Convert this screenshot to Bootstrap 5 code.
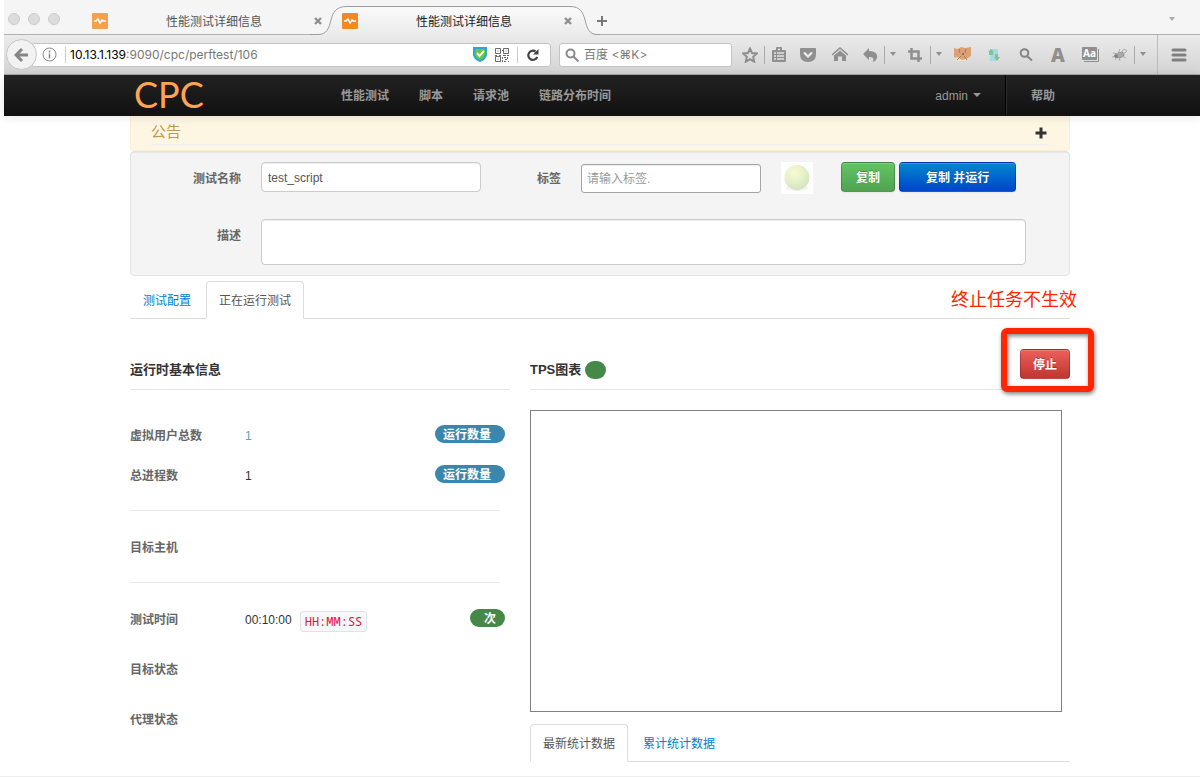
<!DOCTYPE html>
<html lang="zh-CN">
<head>
<meta charset="utf-8">
<meta name="viewport" content="width=device-width, initial-scale=1">
<title>性能测试详细信息</title>
<link href="https://cdn.jsdelivr.net/npm/bootstrap@5.3.0/dist/css/bootstrap.min.css" rel="stylesheet">
<style>
  body { font: 12px/20px "Liberation Sans", "Noto Sans CJK SC", sans-serif; color: #333; background: #fff; }
  button { font: inherit; }
  .btn { font-size: 12px; line-height: 20px; }
  .shell { padding-left: 4px; }
  .icon-btn { border: 0; padding: 0; background: none; color: #8f8f8f; display: flex; align-items: center; justify-content: center; height: 18px; flex: none; }
  .icon-btn svg { flex: none; }
  .w16 { width: 16px; } .w28 { width: 28px; } .w30 { width: 30px; } .w32 { width: 32px; }
  .sep { border-left: 1px solid #aaa; }

  /* browser window */
  .tab-strip { height: 35px; background: #f5f5f5; border-bottom: 1px solid #b1b1b1; padding-left: 4px; color: #555; }
  .light { width: 12px; height: 12px; border-radius: 50%; background: #dcdcdc; border: 1px solid #cbcbcb; }
  .lights { width: 72px; gap: 8px; padding-top: 3px; }
  .browser-tab { width: 250px; height: 35px; padding: 6px 6px 0 12px; position: relative; color: #555; }
  .browser-tab > * { position: relative; }
  .browser-tab > .tab-title { padding: 2px 0 0 8px; }
  .browser-tab > .tab-shape { position: absolute; left: -20px; top: 0; }
  .browser-tab.current { color: #222; }
  .address-row { height: 40px; background: linear-gradient(#ebebeb, #d3d3d3); border-bottom: 1px solid #a8a8a8; padding-left: 2px; }
  .back { width: 31px; height: 31px; border: 1px solid #c6c6c6; border-radius: 50%; background: #f2f2f2; padding: 0; flex: none; z-index: 1; }
  .field { height: 24px; background: #fff; border: 1px solid #c4c4c4; border-radius: 3px; font-family: Inter, "Noto Sans CJK SC", sans-serif; font-size: 12px; color: #777; }
  .address { margin-left: -6px; padding-left: 10px; }
  .address b { font-weight: 400; color: #000; }
  .bar { height: 16px; width: 5px; border-left: 1px solid #ccc; }
  .search { width: 173px; padding-left: 5px; flex: none; }
  .search input { border: 0; padding: 0; min-width: 0; outline: 0; color: #777; font-size: 12px; line-height: 20px; }
  .search input::placeholder { color: #777; opacity: 1; }
  .menu-btn { width: 43px; height: 39px; border-left: 1px solid #bbb; margin-left: 7px; }

  /* application */
  .app { width: 100%; max-width: 940px; margin: 0 auto; }
  .topbar { height: 41px; background: linear-gradient(#222, #111); padding: 0 4px 0 0; position: relative; box-shadow: 0 1px 10px rgba(0,0,0,.1); border-bottom: 1px solid #1a1014; }
  .topbar .nav-link { color: #999; font-size: 12px; line-height: 20px; padding: 11px 15px 9px; font-weight: 700; }
  .topbar .dropdown-toggle { font-weight: 400; }
  .topbar .dropdown-toggle::after { border-width: 4px 4px 0; margin-left: 5px; vertical-align: 3px; }
  .logo { color: #ffa552; font: 36px/39px Lato, sans-serif; text-decoration: none; width: 196px; padding-left: 4px; }
  .divider { border-left: 1px solid #000; box-shadow: inset 1px 0 #2b2b2b; padding-left: 10px; }
  .notice { background: #fdf6e2; border: 1px solid #fbeed5; border-top: 0; border-radius: 0 0 4px 4px; padding: 0 20px 5px; }
  .notice-head { border-bottom: 1px solid #eee; height: 29px; }
  .notice-head .icon-btn { margin: 8px 2px 0 0; }
  .notice h1 { font-size: 15px; line-height: 20px; color: #c09853; margin: 6px 0 0; font-weight: 400; }
  .panel { background: #f4f4f4; border: 1px solid #e3e3e3; border-radius: 4px; padding: 10px 0; box-shadow: inset 0 1px 1px rgba(0,0,0,.05); }
  .panel label, .info-label { font-weight: 700; color: #666; }
  .panel label { padding-top: 7px; flex: none; }
  .lab-main { width: 110px; text-align: right; }
  .lab-tag { width: 80px; text-align: right; }
  .form-control { font-size: 12px; line-height: 20px; padding: 5px 6px 3px; color: #555; border-color: #ccc; border-radius: 4px; box-shadow: inset 0 1px 1px rgba(0,0,0,.075); margin-left: 20px; }
  .form-control::placeholder { color: #999; }
  .name-box { width: 220px; height: 30px; }
  .tag-box { width: 180px; height: 29px; padding: 3px 5px; border-color: #a5a5a5; border-radius: 3px; margin-top: 2px; }
  .desc-row { margin-top: 25px; }
  .desc-box { height: 46px; resize: none; margin-right: 43px; }
  .status-ball { width: 32px; height: 32px; background: #fff; margin: 0 28px 0 20px; }
  .act { height: 30px; padding: 5px 14px 3px; border: 1px solid rgba(0,0,0,.2); border-radius: 4px; color: #fff; font-weight: 700; text-shadow: 0 -1px 0 rgba(0,0,0,.25); box-shadow: inset 0 1px 0 rgba(255,255,255,.2), 0 1px 2px rgba(0,0,0,.05); }
  .act:hover { color: #fff; }
  .act-green { background: linear-gradient(#62c462, #51a351); }
  .act-blue { background: linear-gradient(#0088cc, #0044cc); padding: 5px 26px 3px; margin-left: 4px; }
  .act-red { background: linear-gradient(#ee5f5b, #bd362f); padding: 5px 12px 3px; }
  .nav-tabs { border-color: #ddd; gap: 2px; }
  .nav-tabs .nav-link { font-size: 12px; line-height: 20px; padding: 9px 12px 7px; color: #0080cc; border-radius: 4px 4px 0 0; }
  .nav-tabs .nav-link.active { color: #555; border-color: #ddd #ddd #fff; }
  .main-tabs { margin-top: 5px; position: relative; }
  .note { position: absolute; right: -7px; top: 6px; font-size: 18px; line-height: 26px; color: #ff2600; }
  .board { gap: 20px; margin-top: 30px; }
  .left-col { flex: 380 1 0; } .right-col { flex: 540 1 0; }
  .board-head { height: 41px; border-bottom: 1px solid #e5e5e5; margin-bottom: 20px; }
  .board-head h2 { font-size: 13px; line-height: 20px; font-weight: 700; margin: 11px 0 0; }
  .dot { display: inline-block; width: 21px; height: 18px; border-radius: 9px; background: #468847; vertical-align: -5px; margin-left: 4px; }
  .marked { position: relative; }
  .marked::after { content: ""; position: absolute; inset: -21px -24px -13px -19px; border: 6px solid #ff2600; border-radius: 6px; filter: drop-shadow(1px 2px 2px rgba(0,0,0,.5)); pointer-events: none; }
  .info-list { padding-top: 6px; }
  .info { min-height: 40px; padding-right: 5px; }
  .info.tall { min-height: 50px; }
  .states { margin-top: 5px; }
  .info-label { width: 115px; }
  .user-count { color: #5aa0c8; }
  .rule { border: 0; border-top: 1px solid #e8e8e8; opacity: 1; margin: 14px 10px 17px 0; }
  .pill { font-size: 12px; line-height: 20px; height: 18px; font-weight: 700; color: #fff; border-radius: 9px; background: #3a87ad; padding: 0 14px 0 8px; margin-bottom: 4px; }
  .pill-green { background: #468847; padding: 0 9px 0 14px; }
  .fmt { font: 12px/19px "Noto Sans Mono", "DejaVu Sans Mono", monospace; color: #d14; background: #f7f7f9; border: 1px solid #e1e1e8; border-radius: 3px; padding: 0 4px; margin: 2px 0 0 8px; }
  .chart { height: 302px; border: 1px solid #808080; margin: 0 8px 12px 0; }
  .page-end { border-top: 1px solid #eee; margin-top: 14px; }
</style>
</head>
<body>
<div class="shell">
  <header>
    <div class="tab-strip d-flex">
      <div class="lights d-flex align-items-center">
        <span class="light"></span><span class="light"></span><span class="light"></span>
      </div>
      <div class="browser-tab d-flex align-items-center">
        <svg width="16" height="16"><rect width="16" height="16" rx="1" fill="#f6a04c"/><path d="M2 8h2l2-2 2 4 2-3 1 1h3" fill="none" stroke="#fff" stroke-width="1.500"/></svg>
        <span class="tab-title flex-fill text-center">性能测试详细信息</span>
        <button class="icon-btn" aria-label="关闭"><svg width="12" height="10" stroke="currentColor" stroke-width="2.400"><path d="M3 2l6 6M9 2L3 8"/></svg></button>
      </div>
      <div class="browser-tab current d-flex align-items-center">
        <svg class="tab-shape" width="290" height="36"><defs><linearGradient id="tg" x2="0" y2="1"><stop stop-color="#fafafa"/><stop offset="1" stop-color="#ebebeb"/></linearGradient></defs><path d="M0 34.500H8C17 34.500 19 28 21 20C23 12 26 6.500 37 6.500H260C270 6.500 273 12 275 20C277 28 279 34.500 287 34.500H290V36H0Z" fill="url(#tg)"/><path d="M0 34.500H8C17 34.500 19 28 21 20C23 12 26 6.500 37 6.500H260C270 6.500 273 12 275 20C277 28 279 34.500 287 34.500H290" fill="none" stroke="#9d9d9d"/></svg>
        <svg width="16" height="16"><rect width="16" height="16" rx="1" fill="#f08a24"/><path d="M2 8h2l2-2 2 4 2-3 1 1h3" fill="none" stroke="#fff" stroke-width="1.500"/></svg>
        <span class="tab-title flex-fill text-center">性能测试详细信息</span>
        <button class="icon-btn" aria-label="关闭"><svg width="12" height="10" stroke="currentColor" stroke-width="2.400"><path d="M3 2l6 6M9 2L3 8"/></svg></button>
      </div>
      <button class="icon-btn align-self-center ms-3 mt-2" aria-label="新标签"><svg width="12" height="12" stroke="#777" stroke-width="2"><path d="M6 1v10M1 6h10"/></svg></button>
      <button class="icon-btn ms-auto align-self-center me-4 mt-1" aria-label="全部标签"><svg width="8" height="5"><path d="M1 0h6L4 4z" fill="#aaa"/></svg></button>
    </div>
    <div class="address-row d-flex align-items-center">
      <button class="back" aria-label="后退"><svg width="16" height="16" fill="none" stroke="#858585" stroke-width="3"><path d="M14 8H3M8 2L2 8l6 6"/></svg></button>
      <div class="field address d-flex align-items-center flex-fill">
        <svg width="15" height="15" fill="none" stroke="#888"><circle cx="7.500" cy="7.500" r="6.500"/><path d="M7.500 6.500v5M7.500 3.500v2" stroke-width="1.500"/></svg>
        <span class="bar ms-2"></span>
        <span class="text-nowrap"><b>10.13.1.139</b>:9090/cpc/perftest/106</span>
        <span class="ms-auto d-flex align-items-center">
          <svg width="14" height="15"><path d="M0 0h14v8q-1 5-7 7q-6-2-7-7z" fill="#2aa7d4"/><path d="M2 2h10v6q-1 3-5 5q-4-2-5-5z" fill="#62c93c"/><path d="M4 6l2.500 3L11 4" fill="none" stroke="#fff" stroke-width="2"/></svg>
          <svg class="mx-2" width="14" height="14" fill="none" stroke="#6a6a6a"><path d="M.5.5h5v5h-5zM8.500.5h5v5h-5zM.5 8.500h5v5h-5zM2.500 3h1M10.500 3h1M2.500 11h1M8 7.500h3M12 7.500h2M0 7.500h2M4 7.500h2M7.500 9v2M7.500 12v2M9 9.500h2M12.500 9v2M10 11.500h2M9 13.500h2M13 13.500h1M7 2.500h1"/></svg>
          <span class="bar"></span>
          <button class="icon-btn me-2 ms-1" aria-label="刷新"><svg width="16" height="14"><path d="M11.200 9A4.600 4.600 0 1 1 9.500 3.500" fill="none" stroke="#444" stroke-width="2.200"/><path d="M12.500 1v5.500H7z" fill="#444"/></svg></button>
        </span>
      </div>
      <label class="field search d-flex align-items-center ms-2 me-1">
        <svg class="me-1 flex-shrink-0" width="15" height="14" fill="none" stroke="#8a8a8a" stroke-width="2"><circle cx="5.500" cy="5.500" r="4"/><path d="M8.500 8.500l5 5"/></svg>
        <input type="text" placeholder="百度 &lt;⌘K&gt;" aria-label="搜索">
      </label>
      <div class="d-flex align-items-center flex-shrink-0" role="toolbar">
        <button class="icon-btn w28" aria-label="收藏"><svg width="16" height="16" fill="none" stroke="currentColor" stroke-width="2"><path d="M8 1.500l2 4.500 4.800.500-3.600 3.300 1 4.900L8 12.200l-4.200 2.500 1-4.900L1.200 6.500 6 6z"/></svg></button>
        <button class="icon-btn sep w28" aria-label="书签"><svg width="14" height="15"><path d="M1 3h3V1q0-1 1-1h4q1 0 1 1v2h3q1 0 1 1v10q0 1-1 1H1q-1 0-1-1V4q0-1 1-1z" fill="currentColor"/><path d="M2 6h2M5 6h7M2 9h2M5 9h7M2 12h2M5 12h7M6 2.500h2" stroke="#e4e4e4" stroke-width="1.500"/></svg></button>
        <button class="icon-btn w32" aria-label="Pocket"><svg width="16" height="14"><path d="M1 0h14q1 0 1 1v5q0 8-8 8T0 6V1q0-1 1-1z" fill="currentColor"/><path d="M4 4.500l4 4 4-4" fill="none" stroke="#eee" stroke-width="2.200"/></svg></button>
        <button class="icon-btn w32" aria-label="主页"><svg width="16" height="15"><path d="M0 8l8-7 8 7" fill="none" stroke="currentColor" stroke-width="1.500"/><path d="M8 3.500l6 5V14h-4V9.500H6V14H2V8.500z" fill="currentColor"/></svg></button>
        <button class="icon-btn w28" aria-label="撤销"><svg width="15" height="14"><path d="M6 0v3c6 0 9 3 8 7q-1 3-4 4c1-4 0-5-4-5v3L0 6z" fill="currentColor"/></svg></button>
        <button class="icon-btn sep w16" aria-label="展开"><svg width="8" height="5"><path d="M1 0h6L4 4z" fill="currentColor"/></svg></button>
        <button class="icon-btn w30" aria-label="截图"><svg width="14" height="14" fill="none" stroke="currentColor" stroke-width="2.500"><path d="M3.500 0v10.500H14M0 3.500h10.500V14"/></svg></button>
        <button class="icon-btn sep w16" aria-label="展开"><svg width="8" height="5"><path d="M1 0h6L4 4z" fill="currentColor"/></svg></button>
        <button class="icon-btn w32" aria-label="狐狸"><svg width="17" height="15"><path d="M0 1l4 1 3-2 4 1 6-1v9l-3 2-3 2H4l-4-3z" fill="#dfa077"/><path d="M0 11l4-1 4 3 7-2-3 3H2z" fill="#e8e6c4"/><path d="M5 2l1 4M12 2l-1 4M3 13l4-4M13 13l-3-4" stroke="#a77858"/><circle cx="9" cy="7" r="1" fill="#666"/></svg></button>
        <button class="icon-btn w32" aria-label="同步"><svg width="12" height="14"><path d="M2 1h8v12H2z" fill="#a9d8e8"/><path d="M0 4l3-3 3 3H5v3H1V4zM6 9h1V6h3v3h2l-3 4z" fill="#7cc490"/></svg></button>
        <button class="icon-btn w32" aria-label="查找"><svg width="14" height="14" fill="none" stroke="#858585" stroke-width="2"><circle cx="5.500" cy="5" r="3.800"/><path d="M8 8l5 4.500"/></svg></button>
        <button class="icon-btn w32" aria-label="字体"><svg width="20" height="30"><text x="10" y="22" text-anchor="middle" fill="currentColor" font-family="Open Sans" font-weight="800" font-size="19">A</text></svg></button>
        <button class="icon-btn w32" aria-label="字典"><svg width="17" height="15"><path d="M2 14.500h14.500V2" fill="none" stroke="currentColor"/><rect width="15" height="13" rx="1" fill="currentColor"/><text x="7.500" y="10" text-anchor="middle" fill="#fff" font-family="Noto Sans" font-weight="700" font-size="10">Aa</text></svg></button>
        <button class="icon-btn w28" aria-label="调试"><svg width="16" height="14" fill="none" stroke="#8c8c8c"><ellipse cx="8" cy="7" rx="4" ry="2.500" fill="#aaa" transform="rotate(-20 8 7)"/><path d="M1 5l5 1 2-5M9 5l3-4 3 2-5 4M0 9l5-1-2 4M7 9l1 4M10 8l4 2" stroke="#aaa"/><circle cx="4" cy="8" r="1.500" fill="#777"/></svg></button>
        <button class="icon-btn sep w16" aria-label="展开"><svg width="8" height="5"><path d="M1 0h6L4 4z" fill="currentColor"/></svg></button>
        <button class="icon-btn menu-btn" aria-label="菜单"><svg width="16" height="14" stroke="#808080" stroke-width="3" stroke-linecap="round"><path d="M2 2h12M2 7h12M2 12h12"/></svg></button>
      </div>
    </div>
  </header>
  <nav class="topbar">
    <div class="app d-flex">
      <a class="logo" href="#">CPC</a>
      <div class="nav flex-nowrap">
        <a class="nav-link" href="#">性能测试</a>
        <a class="nav-link" href="#">脚本</a>
        <a class="nav-link" href="#">请求池</a>
        <a class="nav-link" href="#">链路分布时间</a>
      </div>
      <div class="nav flex-nowrap ms-auto">
        <a class="nav-link dropdown-toggle pe-4" href="#">admin</a>
        <div class="divider"><a class="nav-link" href="#">帮助</a></div>
      </div>
    </div>
  </nav>
</div>

<main class="app">
  <section class="notice">
    <div class="notice-head d-flex justify-content-between">
      <h1>公告</h1>
      <button class="icon-btn" aria-label="展开公告"><svg width="12" height="12" stroke="#333" stroke-width="3"><path d="M6 .5v11M.5 6h11"/></svg></button>
    </div>
  </section>
  <form class="panel">
    <div class="d-flex align-items-start">
      <label class="lab-main" for="name">测试名称</label>
      <input class="form-control name-box" id="name" value="test_script">
      <label class="lab-tag" for="tag">标签</label>
      <input class="form-control tag-box" id="tag" placeholder="请输入标签.">
      <svg class="status-ball flex-shrink-0" viewBox="0 0 32 32"><defs><radialGradient id="ball" cx=".4" cy=".3" r=".8"><stop stop-color="#f8fcd2"/><stop offset=".5" stop-color="#e4f0ca"/><stop offset="1" stop-color="#cfe0bb"/></radialGradient></defs><ellipse cx="16" cy="26" rx="11" ry="3" fill="#f1f1f1"/><circle cx="16" cy="15.500" r="12.500" fill="url(#ball)"/></svg>
      <button type="button" class="btn act act-green">复制</button>
      <button type="button" class="btn act act-blue">复制 并运行</button>
    </div>
    <div class="d-flex desc-row">
      <label class="lab-main" for="desc">描述</label>
      <textarea class="form-control desc-box" id="desc"></textarea>
    </div>
  </form>

  <div class="main-tabs">
    <ul class="nav nav-tabs">
      <li class="nav-item"><a class="nav-link" href="#">测试配置</a></li>
      <li class="nav-item"><a class="nav-link active" href="#">正在运行测试</a></li>
    </ul>
    <span class="note">终止任务不生效</span>
  </div>

  <div class="board d-flex">
    <section class="left-col">
      <div class="board-head d-flex align-items-start"><h2>运行时基本信息</h2></div>
      <div class="info-list">
        <div class="info d-flex align-items-center"><span class="info-label">虚拟用户总数</span><span class="user-count">1</span><span class="pill ms-auto">运行数量</span></div>
        <div class="info d-flex align-items-center"><span class="info-label">总进程数</span><span>1</span><span class="pill ms-auto">运行数量</span></div>
        <hr class="rule">
        <div class="info d-flex align-items-center"><span class="info-label">目标主机</span></div>
        <hr class="rule">
        <div class="info d-flex align-items-center"><span class="info-label">测试时间</span><span>00:10:00</span><code class="fmt">HH:MM:SS</code><span class="pill pill-green ms-auto">次</span></div>
        <div class="states">
          <div class="info tall d-flex align-items-center"><span class="info-label">目标状态</span></div>
          <div class="info tall d-flex align-items-center"><span class="info-label">代理状态</span></div>
        </div>
      </div>
    </section>
    <section class="right-col">
      <div class="board-head d-flex justify-content-between align-items-start">
        <h2>TPS图表<span class="dot"></span></h2>
        <span class="marked"><button type="button" class="btn act act-red">停止</button></span>
      </div>
      <div class="chart"></div>
      <ul class="nav nav-tabs">
        <li class="nav-item"><a class="nav-link active" href="#">最新统计数据</a></li>
        <li class="nav-item"><a class="nav-link" href="#">累计统计数据</a></li>
      </ul>
    </section>
  </div>
</main>
<div class="page-end"></div>
<script src="https://cdn.jsdelivr.net/npm/bootstrap@5.3.0/dist/js/bootstrap.bundle.min.js"></script>
</body>
</html>
